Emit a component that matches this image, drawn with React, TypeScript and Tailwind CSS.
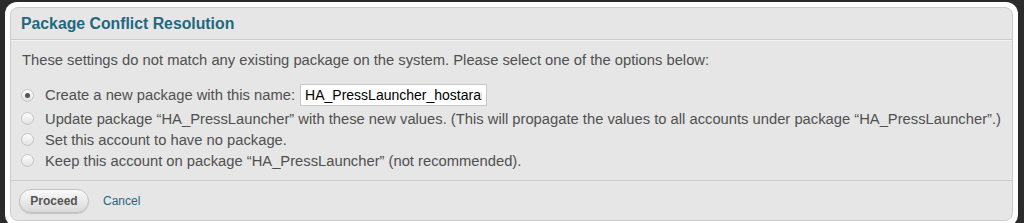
import React, { useState } from 'react';

const options = [
  'create',
  'update',
  'none',
  'keep',
];

const Radio: React.FC<{ checked: boolean; onClick: () => void }> = ({ checked, onClick }) => (
  <span
    onClick={onClick}
    className="flex items-center justify-center w-[13px] h-[13px] rounded-full border border-[#c4c4c4] bg-gradient-to-b from-[#fdfdfd] to-[#e2e2e2] shrink-0 cursor-pointer"
  >
    {checked && <span className="w-[5px] h-[5px] rounded-full bg-[#555]" />}
  </span>
);

export default function App() {
  const [choice, setChoice] = useState('create');
  const [name, setName] = useState('HA_PressLauncher_hostarar');

  return (
    <div
      className="h-[223px] overflow-hidden bg-[#2b2b2b] pl-[5px] pr-[6px] pt-[2px]"
      style={{ fontFamily: '"Liberation Sans", Arial, sans-serif' }}
    >
      <div className="bg-white rounded-[12px] p-[5px] pb-[6px]">
        <div className="h-[214px] rounded-[8px] border border-[#cbcbcb] bg-[#e6e6e6] flex flex-col">
          {/* Header */}
          <div className="h-[32px] flex items-center px-[10px] border-b border-[#cbcbcb]">
            <h2 className="text-[15.8px] font-bold text-[#1f6880]">Package Conflict Resolution</h2>
          </div>

          {/* Body */}
          <div className="flex-1 border-t border-[#f4f4f4] px-[11px] pt-[11px]">
            <p className="text-[14.75px] leading-[16px] text-[#505050]">
              These settings do not match any existing package on the system. Please select one of the options below:
            </p>

            <div className="mt-[16px] flex flex-col text-[14.75px] leading-[16px] text-[#505050]">
              <div className="flex items-center h-[22px]">
                <span className="-ml-[1px]">
                  <Radio checked={choice === options[0]} onClick={() => setChoice(options[0])} />
                </span>
                <span className="ml-[11px]">Create a new package with this name:</span>
                <input
                  type="text"
                  value={name}
                  onChange={(e) => setName(e.target.value)}
                  className="ml-[5px] w-[187px] h-[22px] px-[4px] border border-[#c8c8c8] bg-white text-[14px] text-black outline-none"
                />
              </div>
              <div className="flex items-center h-[21px] mt-[2px]">
                <span className="-ml-[1px]">
                  <Radio checked={choice === options[1]} onClick={() => setChoice(options[1])} />
                </span>
                <span className="ml-[11px] whitespace-nowrap">
                  Update package “HA_PressLauncher” with these new values. (This will propagate the values to all accounts under package “HA_PressLauncher”.)
                </span>
              </div>
              <div className="flex items-center h-[21px]">
                <span className="-ml-[1px]">
                  <Radio checked={choice === options[2]} onClick={() => setChoice(options[2])} />
                </span>
                <span className="ml-[11px]">Set this account to have no package.</span>
              </div>
              <div className="flex items-center h-[21px]">
                <span className="-ml-[1px]">
                  <Radio checked={choice === options[3]} onClick={() => setChoice(options[3])} />
                </span>
                <span className="ml-[11px]">Keep this account on package “HA_PressLauncher” (not recommended).</span>
              </div>
            </div>
          </div>

          {/* Actions */}
          <div className="h-[40px] border-t border-[#cbcbcb] flex items-center pl-[8px] pt-[1px]">
            <button
              type="button"
              className="w-[70px] h-[24px] rounded-full border border-[#c2c2c2] bg-gradient-to-b from-[#fafafa] to-[#d9d9d9] text-[12px] font-bold text-[#555] shadow-[0_1px_1px_rgba(0,0,0,0.15)]"
            >
              Proceed
            </button>
            <a href="#" className="ml-[14px] text-[12px] text-[#1f6880]">
              Cancel
            </a>
          </div>
        </div>
      </div>
    </div>
  );
}
